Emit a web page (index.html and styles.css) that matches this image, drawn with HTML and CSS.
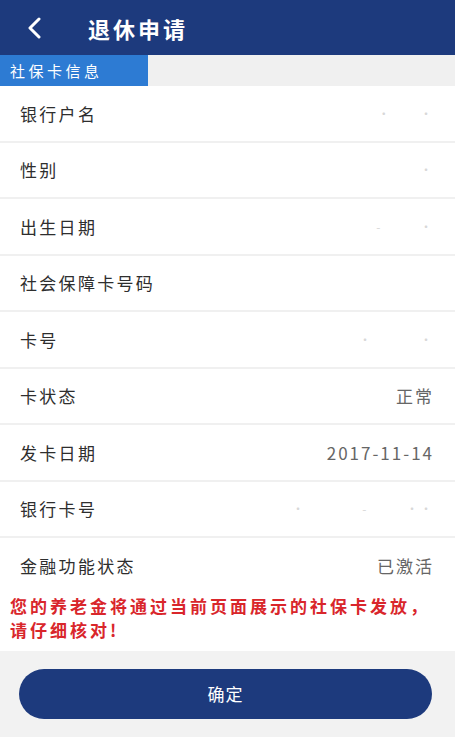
FILE: index.html
```html
<!DOCTYPE html>
<html lang="zh">
<head>
<meta charset="utf-8">
<link rel="stylesheet" href="styles.css">
</head>
<body>
<div class="page">
  <header class="topbar">
    <svg class="back" width="16" height="22" viewBox="0 0 16 22"><path d="M13 2 L4 11 L13 20" fill="none" stroke="#fff" stroke-width="3" stroke-linecap="round" stroke-linejoin="round"/></svg>
    <h1 class="title">退休申请</h1>
  </header>
  <div class="tabs"><div class="tab">社保卡信息</div></div>
  <div class="list">
    <div class="row"><span class="label">银行户名</span><span class="value blur">·&nbsp;&nbsp;&nbsp;&nbsp;&nbsp;&nbsp;·</span></div>
    <div class="row"><span class="label">性别</span><span class="value blur">·</span></div>
    <div class="row"><span class="label">出生日期</span><span class="value blur">-&nbsp;&nbsp;&nbsp;&nbsp;&nbsp;&nbsp;&nbsp;&nbsp;·</span></div>
    <div class="row"><span class="label">社会保障卡号码</span><span class="value"></span></div>
    <div class="row"><span class="label">卡号</span><span class="value blur">·&nbsp;&nbsp;&nbsp;&nbsp;&nbsp;&nbsp;&nbsp;&nbsp;&nbsp;&nbsp;·</span></div>
    <div class="row"><span class="label">卡状态</span><span class="value">正常</span></div>
    <div class="row"><span class="label">发卡日期</span><span class="value">2017-11-14</span></div>
    <div class="row"><span class="label">银行卡号</span><span class="value blur">·&nbsp;&nbsp;&nbsp;&nbsp;&nbsp;&nbsp;&nbsp;&nbsp;&nbsp;&nbsp;&nbsp;&nbsp;-&nbsp;&nbsp;&nbsp;&nbsp;&nbsp;&nbsp;&nbsp;&nbsp;··</span></div>
    <div class="row last"><span class="label">金融功能状态</span><span class="value">已激活</span></div>
  </div>
  <p class="notice">您的养老金将通过当前页面展示的社保卡发放，<br>请仔细核对!</p>
  <div class="footer"><button class="confirm">确定</button></div>
</div>
</body>
</html>
```
FILE: styles.css
```css
* { box-sizing: border-box; }
html, body { margin: 0; padding: 0; }
body {
  font-family: "Noto Sans CJK SC", "Noto Sans", sans-serif;
  background: #f2f2f2;
  width: 455px;
  height: 737px;
  overflow: hidden;
}
.page { display: flex; flex-direction: column; height: 737px; }
.topbar {
  height: 55px;
  background: #1d3a7d;
  display: flex;
  align-items: center;
  padding-left: 26px;
}
.back { flex: none; }
.title {
  margin: 0 0 0 46px;
  color: #fff;
  font-size: 22px;
  font-weight: 700;
  letter-spacing: 3px;
}
.tabs {
  height: 31px;
  background: #f0f0f0;
  display: flex;
}
.tab {
  width: 148px;
  background: #2d7bd3;
  color: #fff;
  font-size: 15px;
  line-height: 31px;
  padding-left: 10px;
  letter-spacing: 3.5px;
}
.list { display: flex; flex-direction: column; gap: 2px; background: #f0f0f0; }
.row {
  height: 54.5px;
  background: #fff;
  display: flex;
  align-items: center;
  justify-content: space-between;
  padding: 0 23px 0 20px;
}
.label { font-size: 17px; color: #2e2e2e; letter-spacing: 2.3px; }
.value { font-size: 17px; color: #666; letter-spacing: 2px; margin-right: -2px; }
.value.blur { color: #d8d8d8; font-size: 12px; }
.notice {
  margin: 0;
  background: #fff;
  color: #d9262b;
  font-size: 17px;
  font-weight: 700;
  line-height: 24px;
  letter-spacing: 3px;
  padding: 1px 4px 9px 10px;
}
.footer { padding: 18px 23px 0 19px; }
.confirm {
  width: 100%;
  height: 50px;
  border: none;
  border-radius: 25px;
  background: #1d3a7d;
  color: #fff;
  font-family: "Noto Sans CJK SC", "Noto Sans", sans-serif;
  font-size: 17px;
  letter-spacing: 1px;
}
```
